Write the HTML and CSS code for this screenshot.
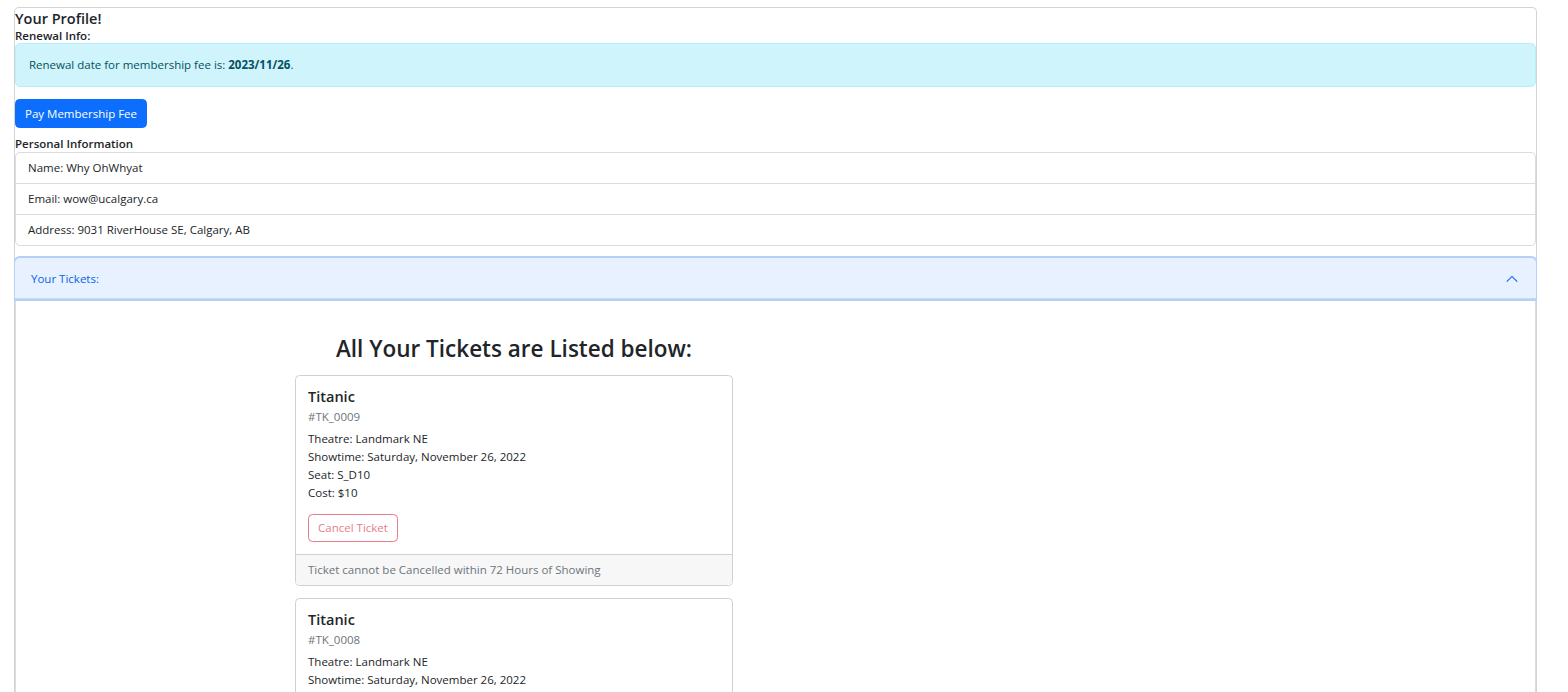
FILE: index.html
```html
<!DOCTYPE html>
<html lang="en">
<head>
<meta charset="utf-8">
<title>Your Profile</title>
<link rel="stylesheet" href="styles.css">
</head>
<body>
<div class="profile-card">
  <div class="profile-title">Your Profile!</div>
  <div class="section-label label-renewal">Renewal Info:</div>
  <div class="alert-info">Renewal date for membership fee is: <strong>2023/11/26</strong>.</div>
  <button class="btn-primary" type="button">Pay Membership Fee</button>
  <div class="section-label label-personal">Personal Information</div>
  <ul class="list-group">
    <li class="list-item">Name: Why OhWhyat</li>
    <li class="list-item">Email: wow@ucalgary.ca</li>
    <li class="list-item">Address: 9031 RiverHouse SE, Calgary, AB</li>
  </ul>
  <div class="accordion">
    <div class="accordion-header">
      <span>Your Tickets:</span>
      <svg class="chevron" width="14" height="14" viewBox="0 0 16 16" fill="none" stroke="#0c63e4" stroke-width="1.2"><path d="M2 11 L8 5 L14 11"/></svg>
    </div>
    <div class="accordion-body">
      <div class="tickets-col">
        <h2 class="tickets-heading">All Your Tickets are Listed below:</h2>
        <div class="ticket-card">
          <div class="ticket-body">
            <div class="ticket-title">Titanic</div>
            <div class="ticket-sub">#TK_0009</div>
            <div class="ticket-text">
              <div>Theatre: Landmark NE</div>
              <div>Showtime: Saturday, November 26, 2022</div>
              <div>Seat: S_D10</div>
              <div>Cost: $10</div>
            </div>
            <button class="btn-cancel" type="button" disabled>Cancel Ticket</button>
          </div>
          <div class="ticket-footer">Ticket cannot be Cancelled within 72 Hours of Showing</div>
        </div>
        <div class="ticket-card">
          <div class="ticket-body">
            <div class="ticket-title">Titanic</div>
            <div class="ticket-sub">#TK_0008</div>
            <div class="ticket-text">
              <div>Theatre: Landmark NE</div>
              <div>Showtime: Saturday, November 26, 2022</div>
              <div>Seat: S_D10</div>
              <div>Cost: $10</div>
            </div>
            <button class="btn-cancel" type="button" disabled>Cancel Ticket</button>
          </div>
          <div class="ticket-footer">Ticket cannot be Cancelled within 72 Hours of Showing</div>
        </div>
      </div>
    </div>
  </div>
</div>
</body>
</html>
```
FILE: styles.css
```css
* { box-sizing: border-box; }
html, body { height: 100%; }
body {
  margin: 7px 31px 0 14px;
  font-family: "Open Sans", "Noto Sans", "Liberation Sans", sans-serif;
  font-size: 11.5px;
  line-height: 18px;
  color: #212529;
  background: #fff;
  overflow: hidden;
}
.profile-card {
  border: 1px solid #d4d4d4;
  border-bottom: none;
  border-radius: 5px 5px 0 0;
  min-height: 700px;
}
.profile-title {
  font-size: 14.5px;
  font-weight: 600;
  line-height: 19px;
  padding-top: 1px;
}
.section-label {
  font-weight: 600;
  font-size: 11.5px;
  line-height: 15px;
}
.alert-info {
  background: #cff4fc;
  border: 1px solid #b6effb;
  color: #055160;
  border-radius: 5px;
  padding: 12px 13px;
  line-height: 18px;
  margin-bottom: 12px;
}
.alert-info strong { font-weight: 700; }
.btn-primary {
  display: block;
  font-family: inherit;
  font-size: 11.5px;
  line-height: 18px;
  height: 29px;
  padding: 0 9px;
  background: #0d6efd;
  border: 1px solid #0d6efd;
  color: #fff;
  border-radius: 4.5px;
}
.label-personal {
  margin-top: 8px;
  line-height: 16px;
}
.list-group {
  list-style: none;
  margin: 0 0 12px;
  padding: 0;
  border: 1px solid #dcdcdc;
  border-radius: 5px;
}
.list-item {
  padding: 6px 12px;
  line-height: 18px;
}
.list-item + .list-item { border-top: 1px solid #dcdcdc; }
.accordion {
  border: 1px solid #dcdcdc;
  border-radius: 5px;
}
.accordion-header {
  display: flex;
  align-items: center;
  justify-content: space-between;
  height: 41px;
  padding: 0 17px 0 16px;
  background: #e7f1ff;
  color: #0c63e4;
  border-radius: 5px 5px 0 0;
  box-shadow: 0 0 0 2px #b6d0f7, inset 0 -1px 0 #c5d8f5;
  margin: -1px -1px 0;
  position: relative;
}
.chevron { display: block; }
.accordion-body {
  padding: 12px 15px;
}
.tickets-col {
  width: 966px;
  display: flex;
  flex-direction: column;
  align-items: center;
}
.tickets-heading {
  margin: 23px 0 12px;
  font-size: 22.5px;
  font-weight: 600;
  line-height: 29px;
}
.ticket-card {
  width: 438px;
  border: 1px solid #d0d0d0;
  border-radius: 4.5px;
  margin-bottom: 12px;
  overflow: hidden;
}
.ticket-body { padding: 12px; }
.ticket-title {
  font-size: 14.5px;
  font-weight: 600;
  line-height: 18px;
  margin-bottom: 4px;
}
.ticket-sub {
  color: #6c757d;
  font-size: 11.5px;
  line-height: 14px;
  margin-bottom: 6px;
}
.ticket-text { margin-bottom: 12px; }
.btn-cancel {
  display: block;
  font-family: inherit;
  font-size: 11.5px;
  line-height: 18px;
  height: 28px;
  padding: 0 9px;
  background: #fff;
  border: 1px solid #dc3545;
  color: #dc3545;
  border-radius: 4.5px;
  opacity: 0.65;
}
.ticket-footer {
  background: #f7f7f7;
  border-top: 1px solid #d0d0d0;
  color: #6c757d;
  padding: 6px 12px;
  line-height: 18px;
}
```
